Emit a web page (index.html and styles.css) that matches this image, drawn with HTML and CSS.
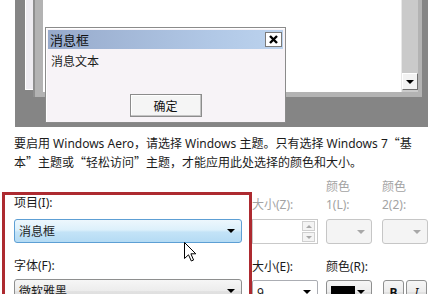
FILE: index.html
```html
<!DOCTYPE html>
<html lang="zh-CN">

<head>
    <meta charset="UTF-8">
    <title>窗口颜色和外观</title>
    <link rel="stylesheet" href="styles.css">
</head>

<body>
    <!-- Preview of the windows -->
    <div class="preview">
        <div class="win inactive"></div>
        <div class="win active">
            <div class="win-content">
                <div class="scrollbar"><span class="scroll-down"></span></div>
            </div>
        </div>
        <div class="msgbox">
            <div class="msg-title">
                <span>消息框</span>
                <span class="msg-close">
                    <svg width="9" height="9" viewBox="0 0 9 9">
                        <path d="M1 1 L8 8 M8 1 L1 8" stroke="#000" stroke-width="2.4" />
                    </svg>
                </span>
            </div>
            <p class="msg-text">消息文本</p>
            <button class="msg-ok">确定</button>
        </div>
    </div>

    <p class="notice">要启用 Windows Aero，请选择 Windows 主题。只有选择 Windows 7<span class="q">“</span>基<br>本<span class="q">”</span>主题或<span class="q">“</span>轻松访问<span class="q">”</span>主题，才能应用此处选择的颜色和大小。</p>

    <div class="settings">
        <div class="col col-item">
            <label class="lbl">项目(I):</label>
            <div class="combo combo-hot"><span>消息框</span><span class="arrow"></span></div>
            <label class="lbl lbl-row2">字体(F):</label>
            <div class="combo"><span>微软雅黑</span><span class="arrow"></span></div>
            <svg class="cursor" width="13" height="20" viewBox="0 0 13 20">
                <path d="M0.5 0.5 L0.5 16.5 L4.5 12.8 L7.3 19 L9.6 18 L6.9 11.8 L11.8 11.8 Z" fill="#fff" stroke="#000" stroke-width="1" />
            </svg>
        </div>

        <div class="col col-size">
            <label class="lbl lbl-top lbl-low disabled">大小(Z):</label>
            <div class="spin">
                <span class="spin-btns">
                    <span class="spin-up"></span>
                    <span class="spin-down"></span>
                </span>
            </div>
            <label class="lbl lbl-row2">大小(E):</label>
            <div class="combo edit-combo"><span>9</span><span class="arrow"></span></div>
        </div>

        <div class="col col-color">
            <label class="lbl lbl-top disabled">颜色<br>1(L):</label>
            <div class="combo combo-off"><span></span><span class="arrow"></span></div>
            <label class="lbl lbl-row2">颜色(R):</label>
            <div class="combo"><span class="swatch"></span><span class="arrow"></span></div>
        </div>

        <div class="col col-color">
            <label class="lbl lbl-top disabled">颜色<br>2(2):</label>
            <div class="combo combo-off"><span></span><span class="arrow"></span></div>
            <span class="lbl lbl-row2"></span>
            <div class="style-btns">
                <button class="bold-btn">B</button>
                <button class="italic-btn">I</button>
            </div>
        </div>
    </div>
</body>

</html>
```

FILE: styles.css
```css
/* Reset default */
body,
p,
label,
button {
    margin: 0;
    padding: 0;
    box-sizing: border-box;
}

body {
    background-color: #fff;
    color: #1b1b1b;
    font-family: "Noto Sans", "Noto Sans CJK SC", sans-serif;
    font-size: 12px;
    overflow: hidden;
}

/* Preview desktop */
.preview {
    position: relative;
    width: 413px;
    height: 127px;
    margin-left: 15px;
    background-color: #858585;
    overflow: hidden;
}

.win {
    position: absolute;
    box-sizing: border-box;
}

.inactive {
    left: 10px;
    top: -10px;
    width: 397px;
    height: 100px;
    background-color: #eeecf1;
    border: 1px solid #fff;
}

.active {
    left: 18px;
    top: -10px;
    width: 389px;
    height: 107px;
    background-color: #b3b3b3;
    border-left: 2px solid #8f8f8f;
    padding: 0 4px 5px 8px;
}

.win-content {
    height: 100%;
    background-color: #fff;
    display: flex;
    justify-content: flex-end;
}

.scrollbar {
    width: 16px;
    background-color: #cacaca;
    border-left: 1px solid #e8e8e8;
    display: flex;
    flex-direction: column;
    justify-content: flex-end;
    padding-bottom: 2px;
}

.scroll-down {
    height: 15px;
    background-color: #f2f2f2;
    border: 1px solid;
    border-color: #fff #6f6f6f #6f6f6f #fff;
    display: flex;
    align-items: center;
    justify-content: center;
}

.scroll-down::after {
    content: "";
    border-left: 4px solid transparent;
    border-right: 4px solid transparent;
    border-top: 4px solid #000;
}

/* Message box */
.msgbox {
    position: absolute;
    left: 30px;
    top: 27px;
    width: 241px;
    height: 96px;
    box-sizing: border-box;
    padding: 2px;
    background-color: #f7f3f7;
    border: 1px solid #8b8b8b;
    box-shadow: inset 1px 1px 0 #fff;
}

.msg-title {
    height: 19px;
    padding: 0 1px 0 2px;
    background: linear-gradient(to right, #97aacb, #b1c8e6 70%, #bcd3ee);
    display: flex;
    align-items: center;
    justify-content: space-between;
    font-size: 13px;
    color: #111;
}

.msg-close {
    width: 17px;
    height: 15px;
    box-sizing: border-box;
    background-color: #fff;
    border: 1px solid #7a7a7a;
    display: flex;
    align-items: center;
    justify-content: center;
}

.msg-text {
    margin-top: 5px;
    padding-left: 3px;
    line-height: 16px;
}

.msg-ok {
    display: block;
    width: 72px;
    height: 23px;
    margin: 24px auto 0;
    background-color: #f5f5f5;
    border: 1px solid #8c8c8c;
    box-shadow: inset -1px -1px 0 #c4c4c4, inset 1px 1px 0 #fff;
    font-family: inherit;
    font-size: 12px;
    color: #111;
}

/* Notice text */
.notice {
    margin: 7px 0 0 14px;
    line-height: 18px;
    white-space: nowrap;
}

/* full width quotes */
.q {
    font-family: "Noto Sans CJK SC", sans-serif;
}

/* Settings grid */
.settings {
    display: flex;
    align-items: flex-start;
    margin-top: 6px;
    padding-left: 2px;
}

.col {
    display: flex;
    flex-direction: column;
    box-sizing: border-box;
}

.col-item {
    position: relative;
    width: 250px;
    margin-top: 14px;
    padding: 0 7px 12px 9px;
    border: 3px solid #ad2a30;
}

.col-size {
    width: 66px;
}

.col-color {
    width: 46px;
    margin-left: 8px;
}

.col-color + .col-color {
    margin-left: 10px;
}

.lbl {
    display: block;
    height: 16px;
    line-height: 16px;
}

.lbl-top {
    height: 36px;
    line-height: 18px;
    margin-bottom: 5px;
}

.lbl-low {
    padding-top: 18px;
}

.disabled {
    color: #a3a3a3;
}

.col-item .lbl:first-child {
    margin-bottom: 8px;
}

.lbl-row2 {
    margin-top: 15px;
    margin-bottom: 5px;
}

/* Dropdowns */
.combo {
    height: 24px;
    box-sizing: border-box;
    padding: 0 6px 0 4px;
    border: 1px solid #8e8f8f;
    border-radius: 3px;
    background: linear-gradient(#f6f6f6, #ececec 50%, #e2e2e2 50%, #dadada);
    display: flex;
    align-items: center;
    justify-content: space-between;
}

.combo-hot {
    border-color: #5d9fd4;
    background: linear-gradient(#edf7fd, #dcf0fb 45%, #c3e3f7 55%, #b4dbf4);
}

.combo-off {
    height: 25px;
    border-color: #c6c6c6;
    background: #f4f4f4;
}

.combo-off .arrow {
    border-top-color: #a8a8a8;
}

.edit-combo {
    border-color: #abadb3;
    border-radius: 2px;
    background: #fff;
}

.arrow {
    width: 0;
    height: 0;
    border-left: 4px solid transparent;
    border-right: 4px solid transparent;
    border-top: 4px solid #000;
}

.swatch {
    width: 24px;
    height: 13px;
    background-color: #000;
}

/* Spinner */
.spin {
    height: 25px;
    box-sizing: border-box;
    padding: 1px 2px 1px 0;
    background-color: #fff;
    border: 1px solid #c9c9c9;
    display: flex;
    justify-content: flex-end;
}

.spin-btns {
    width: 13px;
    display: flex;
    flex-direction: column;
    gap: 1px;
}

.spin-up,
.spin-down {
    flex: 1;
    border: 1px solid #cfcfcf;
    background-color: #f4f4f4;
    display: flex;
    align-items: center;
    justify-content: center;
}

.spin-up::after {
    content: "";
    border-left: 3px solid transparent;
    border-right: 3px solid transparent;
    border-bottom: 3px solid #a8a8a8;
}

.spin-down::after {
    content: "";
    border-left: 3px solid transparent;
    border-right: 3px solid transparent;
    border-top: 3px solid #a8a8a8;
}

/* Bold / italic buttons */
.style-btns {
    display: flex;
    gap: 2px;
    padding-left: 1px;
}

.style-btns button {
    width: 21px;
    height: 24px;
    border: 1px solid #8e8f8f;
    border-radius: 3px;
    background: linear-gradient(#f6f6f6, #ececec 50%, #e2e2e2 50%, #dadada);
    font-family: "Noto Sans", sans-serif;
    font-size: 12px;
    color: #111;
}

.bold-btn {
    font-weight: bold;
}

.italic-btn {
    font-style: italic;
}

/* Mouse pointer */
.cursor {
    position: absolute;
    left: 179px;
    top: 47px;
}
```
